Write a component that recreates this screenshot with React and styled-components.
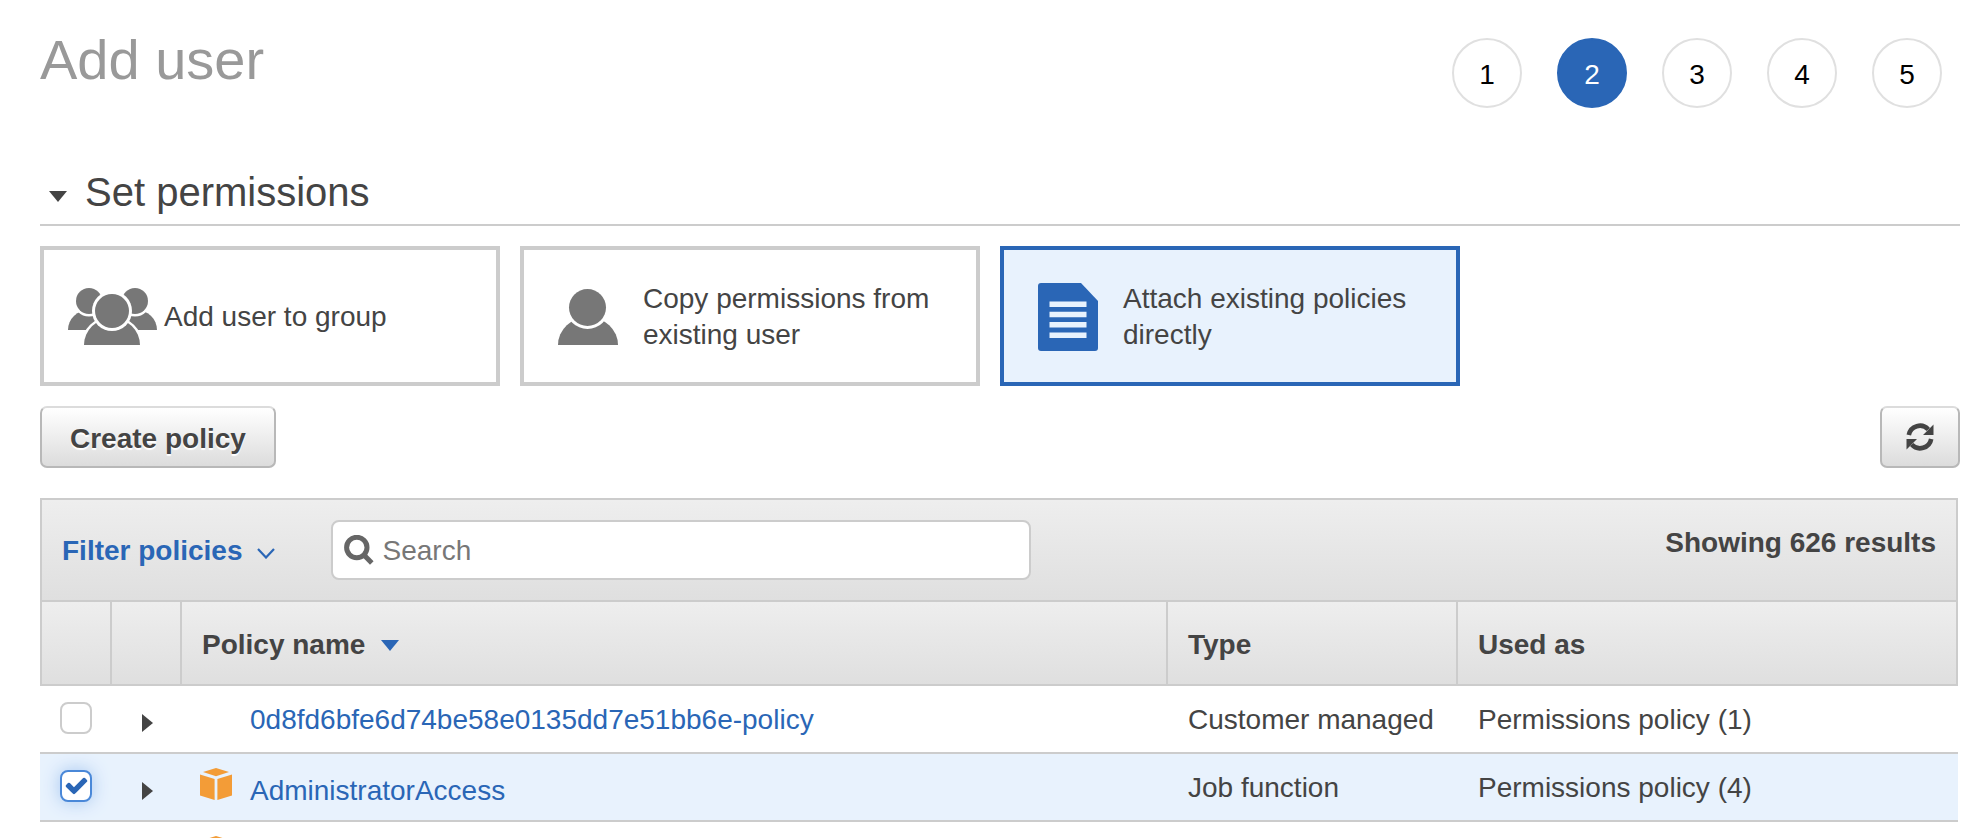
import React, { useState } from 'react';
import styled, { createGlobalStyle } from 'styled-components';

const BLUE = '#2a66b6';
const LINE = '#cccccc';
const SELECTED = '#e8f2fd';

const GlobalStyle = createGlobalStyle`
    * {
        box-sizing: border-box;
    }
    body {
        margin: 0;
        background: #fff;
        color: #444;
        font-family: "Liberation Sans", Arial, sans-serif;
        font-size: 28px;
        line-height: 36px;
    }
    button, input {
        font: inherit;
        color: inherit;
    }
`;

const Page = styled('main')`
    height: 100vh;
    overflow: hidden;
    padding: 28px 20px 0 40px;
`;

const Header = styled('header')`
    display: flex;
    justify-content: space-between;
    align-items: flex-start;
    margin-bottom: 60px;
`;

const Title = styled('h1')`
    margin: 0;
    color: #999;
    font-size: 56px;
    font-weight: normal;
    line-height: 64px;
`;

const Steps = styled('ol')`
    display: flex;
    gap: 35px;
    margin: 10px 18px 0 0;
    padding: 0;
    list-style: none;
`;

const Step = styled('li')`
    display: flex;
    align-items: center;
    justify-content: center;
    width: 70px;
    height: 70px;
    padding-top: 4px;
    border: 2px solid ${({ $active }) => ($active ? BLUE : '#e0e0e0')};
    border-radius: 50%;
    background: ${({ $active }) => ($active ? BLUE : '#fff')};
    color: ${({ $active }) => ($active ? '#fff' : '#000')};
`;

const SectionTitle = styled('h2')`
    margin: 0 0 20px;
    padding-bottom: 8px;
    border-bottom: 2px solid ${LINE};
    font-size: 40px;
    font-weight: normal;
    line-height: 48px;
`;

const PlainButton = styled('button')`
    padding: 0;
    border: 0;
    background: none;
    cursor: pointer;
`;

const SectionToggle = styled(PlainButton)`
    display: flex;
    align-items: center;
    gap: 18px;
    padding-left: 9px;

    svg {
        margin-top: 8px;
    }
`;

const Cards = styled('div')`
    display: flex;
    gap: 20px;
    margin-bottom: 20px;
`;

const Card = styled('button')`
    display: flex;
    align-items: center;
    width: 460px;
    height: 140px;
    padding: 2px 24px 0;
    border: 4px solid ${({ $selected }) => ($selected ? BLUE : LINE)};
    background: ${({ $selected }) => ($selected ? SELECTED : '#fff')};
    text-align: left;
    cursor: pointer;

    svg {
        flex: none;
        margin: ${({ $wideIcon }) => ($wideIcon ? '0 6px 0 0' : '0 25px 0 10px')};
    }
`;

const Actions = styled('div')`
    display: flex;
    justify-content: space-between;
    margin-bottom: 30px;
`;

const Button = styled('button')`
    display: flex;
    align-items: center;
    justify-content: center;
    min-width: 80px;
    height: 62px;
    padding: 4px 28px 0;
    border: 2px solid #b8b8b8;
    border-top-color: #dcdcdc;
    border-radius: 7px;
    background: linear-gradient(#fff, #dcdcdc);
    font-weight: bold;
    text-shadow: 0 2px 1px #fff;
    cursor: pointer;
`;

const IconButton = styled(Button)`
    padding: 0;
`;

const Panel = styled('section')`
    margin-right: 2px;
`;

const Toolbar = styled('div')`
    display: flex;
    align-items: center;
    padding: 20px;
    border: 2px solid ${LINE};
    background: linear-gradient(#eee, #dfdfdf);
`;

const FilterButton = styled(PlainButton)`
    display: flex;
    align-items: center;
    gap: 14px;
    margin-right: 56px;
    padding-top: 2px;
    color: ${BLUE};
    font-weight: bold;

    svg {
        margin-top: 4px;
    }
`;

const SearchBox = styled('label')`
    display: flex;
    align-items: center;
    gap: 9px;
    flex: 0 1 700px;
    height: 60px;
    padding: 0 11px;
    border: 2px solid ${LINE};
    border-radius: 8px;
    background: #fff;
`;

const SearchInput = styled('input')`
    flex: 1;
    min-width: 0;
    padding: 2px 0 0;
    border: 0;
    outline: 0;
    background: none;

    &::placeholder {
        color: #777;
        opacity: 1;
    }
`;

const Results = styled('span')`
    align-self: flex-start;
    margin-top: 5px;
    margin-left: auto;
    font-weight: bold;
`;

const Table = styled('table')`
    width: 100%;
    border-spacing: 0;
    table-layout: fixed;
`;

const HeadCell = styled('th')`
    width: ${({ $width }) => $width || 'auto'};
    height: 84px;
    padding: 4px 20px 0;
    border-right: 2px solid ${LINE};
    border-bottom: 2px solid ${LINE};
    background: linear-gradient(#eee, #dfdfdf);
    text-align: left;

    &:first-child {
        border-left: 2px solid ${LINE};
    }
`;

const SortButton = styled(PlainButton)`
    display: flex;
    align-items: center;
    gap: 16px;
    font-weight: bold;
`;

const Row = styled('tr')`
    background: ${({ $selected }) => ($selected ? SELECTED : '#fff')};
`;

const Cell = styled('td')`
    height: 68px;
    padding: 13px 20px 11px;
    border-bottom: 2px solid ${LINE};
    vertical-align: middle;
    white-space: nowrap;
`;

const CheckCell = styled(Cell)`
    padding: 10px 20px 12px;
`;

const NameCell = styled(Cell)`
    padding-left: 18px;
`;

const PolicyIcon = styled('span')`
    display: inline-block;
    width: 32px;
    margin-right: 18px;

    svg {
        display: block;
    }
`;

const PolicyLink = styled('a')`
    color: ${BLUE};
    text-decoration: none;
`;

const ExpandButton = styled(PlainButton)`
    display: block;
    margin: 0 auto;
    padding-top: 6px;

    svg {
        display: block;
    }
`;

const CheckWrapper = styled('label')`
    display: block;
    position: relative;
    width: 32px;
    height: 32px;
    margin: 0 auto;

    svg {
        position: absolute;
        top: 3px;
        left: 4px;
        pointer-events: none;
    }
`;

const CheckInput = styled('input')`
    display: block;
    appearance: none;
    width: 32px;
    height: 32px;
    margin: 0;
    border: 2px solid ${LINE};
    border-radius: 8px;
    background: #fff;

    &:checked {
        border-color: #4a88d8;
        box-shadow: 0 0 18px #a5c6f0;
    }
`;

const DownTriangle = ({ color }) => (
    <svg width="18" height="11" viewBox="0 0 18 11" fill={color} aria-hidden="true">
        <path d="M0 0h18L9 11z" />
    </svg>
);

const RightTriangle = () => (
    <svg width="11" height="18" viewBox="0 0 11 18" fill="#444" aria-hidden="true">
        <path d="M0 0l11 9L0 18z" />
    </svg>
);

const GroupIcon = () => (
    <svg width="90" height="58" viewBox="0 0 90 58" fill="#777" aria-hidden="true">
        <path d="M0 42a21 20 0 0 1 42 0z" />
        <path d="M47 42a21 20 0 0 1 42 0z" />
        <circle cx="21" cy="13" r="15.500" fill="#fff" />
        <circle cx="67" cy="13" r="15.500" fill="#fff" />
        <circle cx="21" cy="13" r="13" />
        <circle cx="67" cy="13" r="13" />
        <path d="M13 58a31 30 0 0 1 62 0z" fill="#fff" />
        <path d="M16 57a28 27 0 0 1 56 0z" />
        <circle cx="44" cy="23" r="20" fill="#fff" />
        <circle cx="44" cy="23" r="17" />
    </svg>
);

const UserIcon = () => (
    <svg width="60" height="56" viewBox="0 0 60 56" fill="#777" aria-hidden="true">
        <path d="M0 56a30 28 0 0 1 60 0z" />
        <circle cx="29.500" cy="18.500" r="21.500" fill="#fff" />
        <circle cx="29.500" cy="18.500" r="18.500" />
    </svg>
);

const DocumentIcon = () => (
    <svg width="60" height="68" viewBox="0 0 60 68" aria-hidden="true">
        <path d="M3 0h40l17 18v47a3 3 0 0 1-3 3H3a3 3 0 0 1-3-3V3a3 3 0 0 1 3-3z" fill={BLUE} />
        <path d="M11.500 21.200h37M11.500 31.500h37M11.500 41.800h37M11.500 52.200h37" stroke={SELECTED} strokeWidth="5.400" />
    </svg>
);

const RefreshIcon = () => (
    <svg width="28" height="28" viewBox="0 0 28 28" aria-hidden="true">
        <path d="M2.800 12a11.300 11.300 0 0 1 19.500-5.500M25.200 16a11.300 11.300 0 0 1-19.500 5.500" fill="none" stroke="#444" strokeWidth="4.600" />
        <path d="M27.500 1.500V12H17zM.5 26.500V16H11z" fill="#444" />
    </svg>
);

const SearchIcon = () => (
    <svg width="30" height="30" viewBox="0 0 30 30" fill="none" stroke="#666" strokeWidth="5" aria-hidden="true">
        <circle cx="12.800" cy="12.500" r="10.200" />
        <path d="M19.500 19.500l8.300 8.500" />
    </svg>
);

const ChevronIcon = () => (
    <svg width="18" height="11" viewBox="0 0 18 11" fill="none" stroke={BLUE} strokeWidth="2.200" aria-hidden="true">
        <path d="M1 1l8 8.500L17 1" />
    </svg>
);

const CubeIcon = () => (
    <svg width="32" height="32" viewBox="0 0 32 32" fill="#f39c37" aria-hidden="true">
        <path d="M16 0l13 4-13 4.200L3 4z" />
        <path d="M0 6.500l14.600 4.500v21L0 27.500z" />
        <path d="M32 6.500L17.400 11v21L32 27.500z" />
    </svg>
);

const CheckIcon = () => (
    <svg width="25" height="25" viewBox="0 0 1792 1792" fill={BLUE} aria-hidden="true">
        <path d="M1671 566q0 40-28 68l-724 724-136 136q-28 28-68 28t-68-28l-136-136-362-362q-28-28-28-68t28-68l136-136q28-28 68-28t68 28l294 295 656-657q28-28 68-28t68 28l136 136q28 28 28 68z" />
    </svg>
);

const methods = [
    { id: 'group', label: 'Add user to group', Icon: GroupIcon, wideIcon: true },
    { id: 'copy', label: 'Copy permissions from existing user', Icon: UserIcon },
    { id: 'attach', label: 'Attach existing policies directly', Icon: DocumentIcon },
];

const policies = [
    { id: 1, name: '0d8fd6bfe6d74be58e0135dd7e51bb6e-policy', type: 'Customer managed', usedAs: 'Permissions policy (1)' },
    { id: 2, name: 'AdministratorAccess', type: 'Job function', usedAs: 'Permissions policy (4)', aws: true },
    { id: 3, aws: true },
];

const PolicyRow = ({ policy, checked, onToggle }) => (
    <Row $selected={checked}>
        <CheckCell>
            <CheckWrapper>
                <CheckInput type="checkbox" aria-label={policy.name} checked={checked} onChange={onToggle} />
                {checked && <CheckIcon />}
            </CheckWrapper>
        </CheckCell>
        <Cell>
            <ExpandButton type="button"><RightTriangle /></ExpandButton>
        </Cell>
        <NameCell>
            <PolicyIcon>{policy.aws && <CubeIcon />}</PolicyIcon>
            {policy.name && <PolicyLink href="#">{policy.name}</PolicyLink>}
        </NameCell>
        <Cell>{policy.type}</Cell>
        <Cell>{policy.usedAs}</Cell>
    </Row>
);

export default function App() {
    const [method, setMethod] = useState('attach');
    const [selected, setSelected] = useState([2]);

    const toggle = (id) => {
        setSelected(selected.includes(id) ? selected.filter((s) => s !== id) : [...selected, id]);
    };

    return (
        <Page>
            <GlobalStyle />
            <Header>
                <Title>Add user</Title>
                <Steps>
                    {[1, 2, 3, 4, 5].map((n) => (
                        <Step key={n} $active={n === 2}>{n}</Step>
                    ))}
                </Steps>
            </Header>
            <SectionTitle>
                <SectionToggle type="button">
                    <DownTriangle color="#444" />
                    Set permissions
                </SectionToggle>
            </SectionTitle>
            <Cards>
                {methods.map(({ id, label, Icon, wideIcon }) => (
                    <Card
                        key={id}
                        type="button"
                        aria-pressed={method === id}
                        $selected={method === id}
                        $wideIcon={wideIcon}
                        onClick={() => setMethod(id)}
                    >
                        <Icon />
                        <span>{label}</span>
                    </Card>
                ))}
            </Cards>
            <Actions>
                <Button type="button">Create policy</Button>
                <IconButton type="button" aria-label="Refresh"><RefreshIcon /></IconButton>
            </Actions>
            <Panel>
                <Toolbar>
                    <FilterButton type="button">
                        Filter policies
                        <ChevronIcon />
                    </FilterButton>
                    <SearchBox>
                        <SearchIcon />
                        <SearchInput type="text" placeholder="Search" />
                    </SearchBox>
                    <Results>Showing 626 results</Results>
                </Toolbar>
                <Table>
                    <thead>
                        <tr>
                            <HeadCell $width="72px" />
                            <HeadCell $width="70px" />
                            <HeadCell>
                                <SortButton type="button">
                                    Policy name
                                    <DownTriangle color={BLUE} />
                                </SortButton>
                            </HeadCell>
                            <HeadCell $width="290px">Type</HeadCell>
                            <HeadCell $width="500px">Used as</HeadCell>
                        </tr>
                    </thead>
                    <tbody>
                        {policies.map((policy) => (
                            <PolicyRow
                                key={policy.id}
                                policy={policy}
                                checked={selected.includes(policy.id)}
                                onToggle={() => toggle(policy.id)}
                            />
                        ))}
                    </tbody>
                </Table>
            </Panel>
        </Page>
    );
}
